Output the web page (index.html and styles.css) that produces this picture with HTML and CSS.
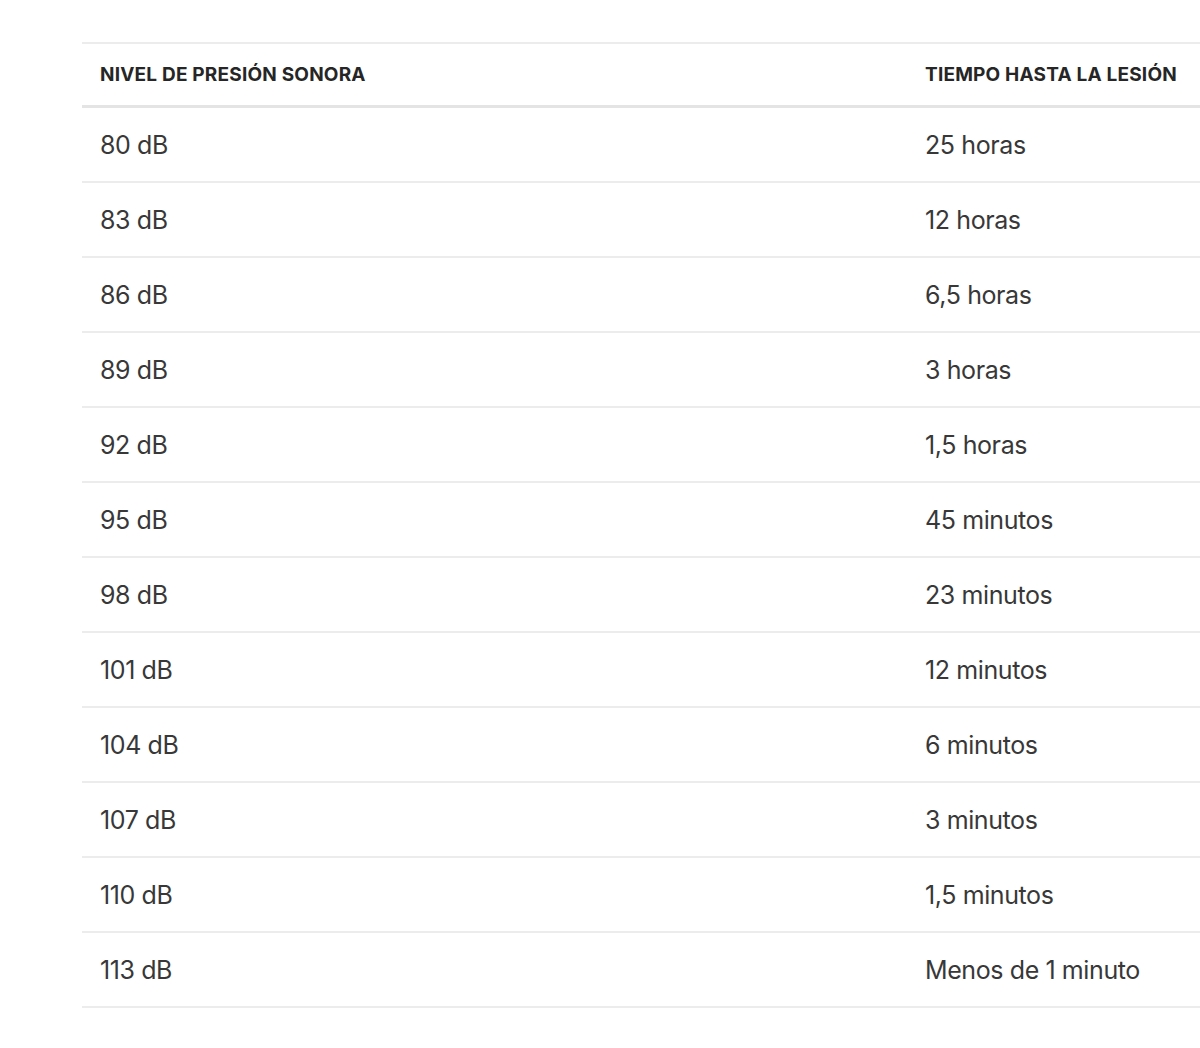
FILE: index.html
```html
<!DOCTYPE html>
<html lang="es">
<head>
<meta charset="utf-8">
<link rel="stylesheet" href="styles.css">
</head>
<body>
<div class="wrap">
<table class="noise">
<colgroup><col class="c1"><col class="c2"></colgroup>
<thead>
<tr><th>Nivel de presión sonora</th><th>Tiempo hasta la lesión</th></tr>
</thead>
<tbody>
<tr><td>80 dB</td><td>25 horas</td></tr>
<tr><td>83 dB</td><td>12 horas</td></tr>
<tr><td>86 dB</td><td>6,5 horas</td></tr>
<tr><td>89 dB</td><td>3 horas</td></tr>
<tr><td>92 dB</td><td>1,5 horas</td></tr>
<tr><td>95 dB</td><td>45 minutos</td></tr>
<tr><td>98 dB</td><td>23 minutos</td></tr>
<tr><td>101 dB</td><td>12 minutos</td></tr>
<tr><td>104 dB</td><td>6 minutos</td></tr>
<tr><td>107 dB</td><td>3 minutos</td></tr>
<tr><td>110 dB</td><td>1,5 minutos</td></tr>
<tr><td>113 dB</td><td>Menos de 1 minuto</td></tr>
</tbody>
</table>
</div>
</body>
</html>
```
FILE: styles.css
```css
html, body {
  margin: 0;
  padding: 0;
  background: #fff;
  overflow: hidden;
}
.wrap {
  padding: 42px 0 0 82px;
  width: 1118px;
  overflow: hidden;
}
.noise {
  border-collapse: collapse;
  table-layout: fixed;
  width: 1200px;
  font-family: Inter, "Noto Sans", sans-serif;
  color: #383838;
}
.c1 { width: 825px; }
.c2 { width: 375px; }
.noise th {
  text-align: left;
  text-transform: uppercase;
  font-size: 19px;
  font-weight: 700;
  color: #262626;
  letter-spacing: 0.2px;
  height: 61px;
  padding: 0 18px;
  border-top: 2px solid #ececec;
  border-bottom: 3px solid #e4e4e4;
  white-space: nowrap;
}
.noise td {
  font-size: 25px;
  font-weight: 400;
  height: 72px;
  padding: 1px 18px 0;
  border-bottom: 2px solid #ececec;
  letter-spacing: -0.4px;
  white-space: nowrap;
}
```
